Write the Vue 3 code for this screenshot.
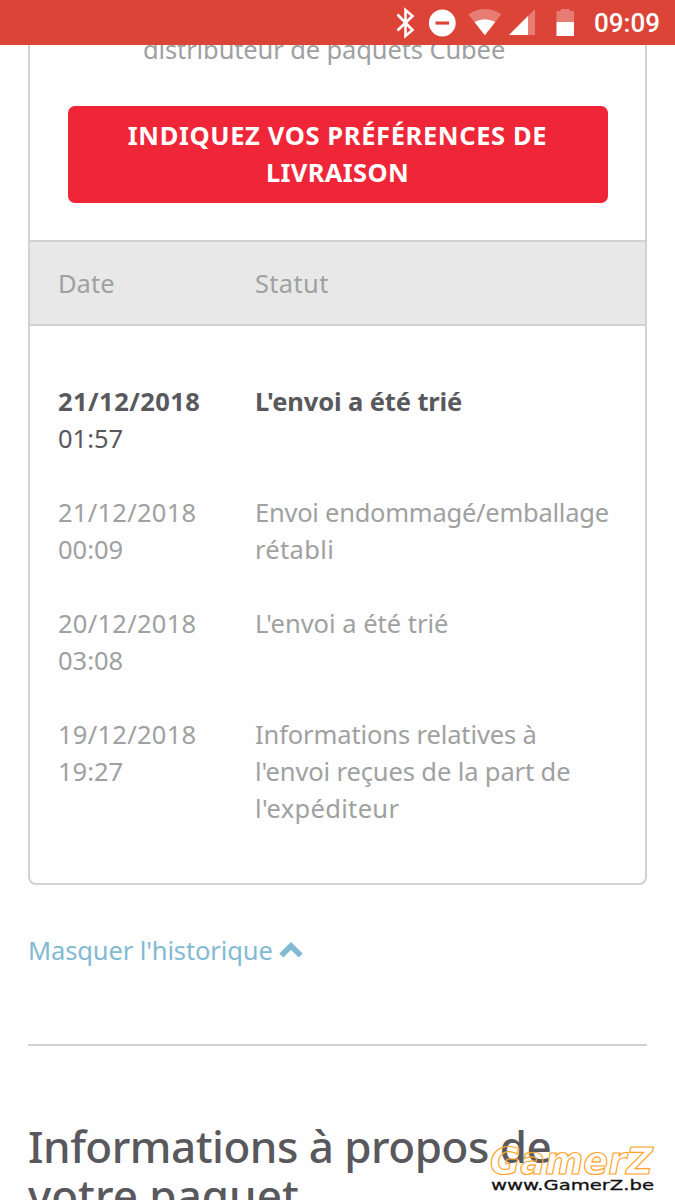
<script setup>
import { ref } from 'vue';

const open = ref(true);

const events = [
  { date: '21/12/2018', time: '01:57', status: [{ text: "L'envoi a été trié", fit: 'snug' }] },
  {
    date: '21/12/2018',
    time: '00:09',
    status: [
      { text: 'Envoi endommagé/emballage', fit: 'tight' },
      { text: 'rétabli', fit: 'loose' },
    ],
  },
  { date: '20/12/2018', time: '03:08', status: [{ text: "L'envoi a été trié", fit: '' }] },
  {
    date: '19/12/2018',
    time: '19:27',
    status: [
      { text: 'Informations relatives à', fit: 'snug' },
      { text: "l'envoi reçues de la part de", fit: 'snug' },
      { text: "l'expéditeur", fit: 'loose' },
    ],
  },
];
</script>

<template>
  <div class="screen">
    <header class="status-bar">
      <svg class="status-icons" width="180" height="45" viewBox="0 0 180 45">
        <path d="M2.5 14.5L17.5 30L10.5 36V10L17.5 16L2.5 30.5" fill="none" stroke="#fff" stroke-width="2.6" />
        <circle cx="47.3" cy="23" r="13.4" fill="#fff" />
        <rect x="40.5" y="21.5" width="13.6" height="3.1" fill="#db4437" />
        <path d="M73.3 14.2Q90 3.8 106.3 14.2L89.8 35Z" fill="#fff" fill-opacity=".3" />
        <path d="M79.5 22Q89.8 16.5 100.3 22L89.8 35.2Z" fill="#fff" />
        <path d="M140 9V35H114Z" fill="#fff" fill-opacity=".3" />
        <path d="M133 16V35H114Z" fill="#fff" />
        <path d="M161.500 11H165.700V9H174.700V11H179V22H161.500Z" fill="#fff" fill-opacity=".3" />
        <rect x="161.500" y="22" width="17.500" height="14" fill="#fff" />
      </svg>
      <span class="clock">09:09</span>
    </header>

    <main class="content">
      <section class="card">
        <p class="intro snug">distributeur de paquets Cubee</p>
        <button class="btn">
          <span class="btn-first">INDIQUEZ VOS PRÉFÉRENCES DE</span><br />
          <span class="loose">LIVRAISON</span>
        </button>
        <div class="row table-head">
          <span>Date</span>
          <span class="loose">Statut</span>
        </div>
        <div class="table-body" v-show="open">
          <div class="row" :class="{ current: index === 0 }" v-for="(event, index) in events" :key="index">
            <div>
              <div class="date">{{ event.date }}</div>
              <div class="time">{{ event.time }}</div>
            </div>
            <div class="status">
              <div v-for="line in event.status" :key="line.text" :class="line.fit">{{ line.text }}</div>
            </div>
          </div>
        </div>
      </section>

      <a class="toggle" @click="open = !open">
        <span class="snug">Masquer l'historique</span>
        <svg width="24" height="17" viewBox="0 0 24 17">
          <path d="M2.3 13.500L12 4L21.700 13.500" fill="none" stroke="#82bad3" stroke-width="5.600" />
        </svg>
      </a>

      <h2 class="title">
        <span class="title-first">Informations à propos de</span><br />
        <span>votre paquet</span>
      </h2>
    </main>

    <svg class="watermark" width="175" height="60" viewBox="0 0 175 60">
      <text class="mark-name" x="5" y="34" textLength="163" lengthAdjust="spacingAndGlyphs">GamerZ</text>
      <text class="mark-url" x="6" y="49.500" textLength="163" lengthAdjust="spacingAndGlyphs">www.GamerZ.be</text>
    </svg>
  </div>
</template>

<style>
body {
  margin: 0;
  background: #fefefe;
}
</style>

<style scoped>
.screen {
  position: relative;
  width: 675px;
  height: 1200px;
  overflow: hidden;
  background: #fefefe;
  color: #9fa1a1;
  font: 25.5px/37px 'Noto Sans', sans-serif;
}

.status-bar {
  position: relative;
  z-index: 1;
  display: flex;
  align-items: center;
  justify-content: flex-end;
  box-sizing: border-box;
  height: 45px;
  padding-right: 15px;
  background: #db4437;
}

.status-icons {
  margin-right: 19px;
}

.clock {
  padding-top: 2px;
  color: #fff;
  font: 500 26px/43px Roboto, sans-serif;
}

.content {
  padding: 0 28px;
}

.card {
  box-sizing: border-box;
  height: 844px;
  margin-top: -4px;
  border: 2px solid #d2d2d2;
  border-top: 0;
  border-radius: 0 0 8px 8px;
  white-space: nowrap;
}

.intro {
  height: 65px;
  margin: 0;
  line-height: 17px;
  text-indent: 113px;
}

.btn {
  display: block;
  box-sizing: border-box;
  width: 540px;
  height: 97px;
  margin: 0 0 37px 37.5px;
  padding: 0 0 2px;
  border: 0;
  border-radius: 7px;
  background: #ef2637;
  color: #fff;
  font: bold 25.5px/37px 'Noto Sans', sans-serif;
}

.btn-first {
  letter-spacing: 0.62px;
}

.tight {
  letter-spacing: -0.25px;
}

.snug {
  letter-spacing: -0.12px;
}

.loose {
  letter-spacing: 0.33px;
}

.row {
  display: grid;
  grid-template-columns: 197px 1fr;
  padding-left: 28px;
}

.table-head {
  box-sizing: border-box;
  height: 86px;
  border-top: 2px solid #d2d2d2;
  border-bottom: 2px solid #d2d2d2;
  background: #e8e8e8;
  line-height: 82px;
}

.table-body {
  display: grid;
  gap: 37px;
  padding-top: 57px;
}

.date {
  letter-spacing: 0.28px;
}

.current {
  color: #58585d;
}

.current .date,
.current .status {
  font-weight: bold;
}

.current .date {
  letter-spacing: 0.45px;
}

.toggle {
  display: flex;
  align-items: center;
  gap: 6px;
  height: 37px;
  margin-top: 47px;
  color: #82bad3;
}

.title {
  margin: 75px 0 0;
  padding-top: 76px;
  border-top: 2px solid #d2d2d2;
  color: #58585d;
  font-size: 44px;
  font-weight: 500;
  line-height: 49px;
  white-space: nowrap;
}

.title-first {
  letter-spacing: -0.5px;
}

.watermark {
  position: absolute;
  left: 485px;
  top: 1140px;
}

.mark-name {
  fill: none;
  stroke: #ffa62b;
  stroke-width: 1.2;
  font: italic bold 37px 'DejaVu Sans', sans-serif;
}

.mark-url {
  fill: #111;
  stroke: #111;
  stroke-width: 0.3;
  font: 14px 'DejaVu Sans', sans-serif;
}
</style>
